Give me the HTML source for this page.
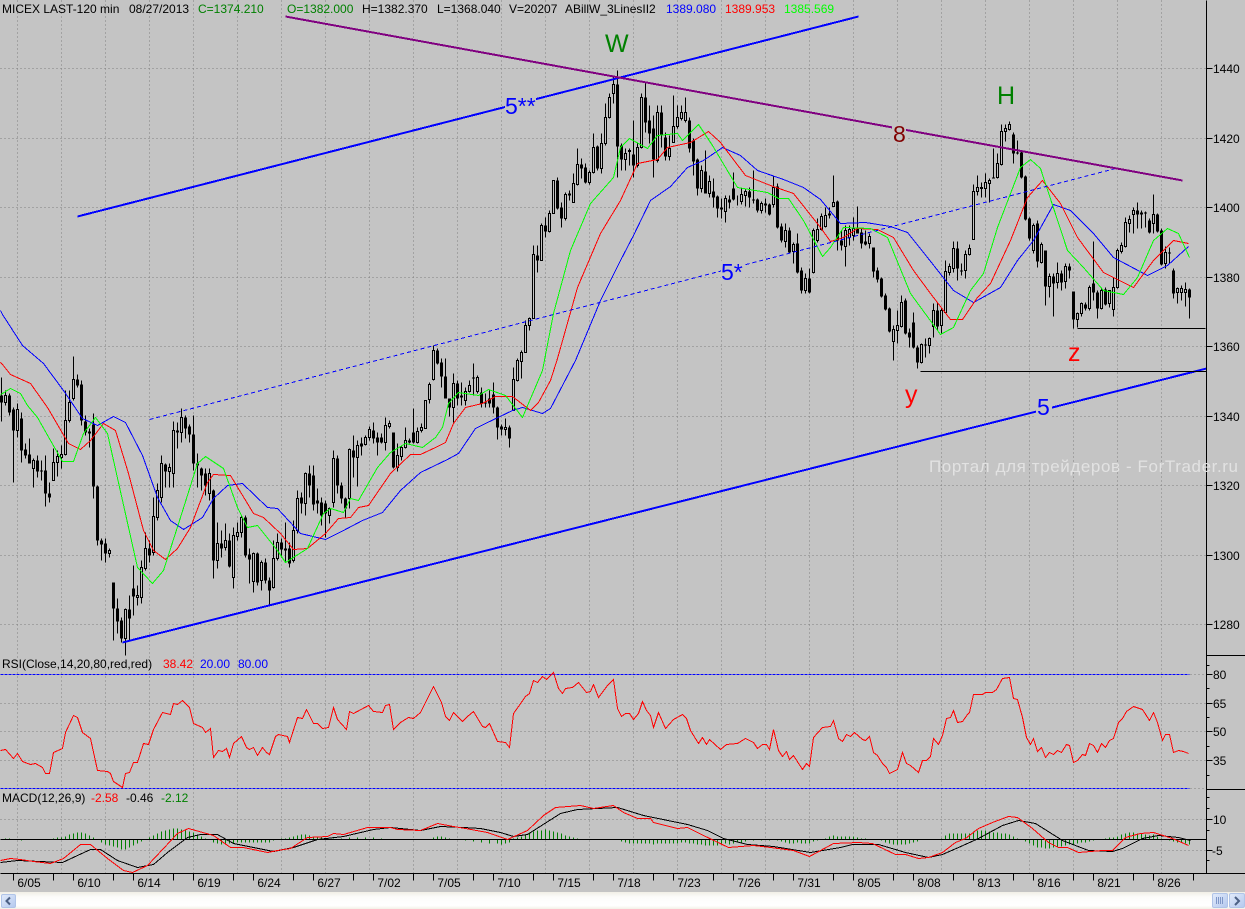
<!DOCTYPE html>
<html>
<head>
<meta charset="utf-8">
<title>MICEX LAST-120 min</title>
<style>
html,body{margin:0;padding:0;background:#c4c4c4;width:1245px;height:909px;overflow:hidden}
svg{display:block}
text{font-family:"Liberation Sans",Arial,sans-serif;font-size:12px;fill:#000}
.l{fill:none;stroke-linejoin:miter}
</style>
</head>
<body>
<svg width="1245" height="909" viewBox="0 0 1245 909" xmlns="http://www.w3.org/2000/svg">
<defs>
<linearGradient id="bar" x1="0" y1="0" x2="0" y2="1"><stop offset="0" stop-color="#f1efe6"/><stop offset=".3" stop-color="#fcfcfa"/><stop offset=".8" stop-color="#ffffff"/><stop offset="1" stop-color="#f3f1e6"/></linearGradient>
<linearGradient id="btn" x1="0" y1="0" x2="1" y2="1"><stop offset="0" stop-color="#e2ebfb"/><stop offset="1" stop-color="#b4c8ee"/></linearGradient>
</defs>
<rect x="0" y="0" width="1245" height="909" fill="#c4c4c4"/>
<g shape-rendering="crispEdges" transform="translate(.5 .5)">
<!-- grid -->
<path class="l" stroke="#808080" stroke-dasharray="1 3" d="M17 0V873M61 0V873M105 0V873M149 0V873M193 0V873M237 0V873M281 0V873M325 0V873M369 0V873M413 0V873M457 0V873M501 0V873M545 0V873M589 0V873M633 0V873M677 0V873M721 0V873M765 0V873M809 0V873M853 0V873M897 0V873M941 0V873M985 0V873M1029 0V873M1073 0V873M1117 0V873M1161 0V873"/>
<path class="l" stroke="#808080" stroke-dasharray="1 3" d="M0 68H1206M0 138H1206M0 207H1206M0 277H1206M0 346H1206M0 416H1206M0 485H1206M0 555H1206M0 624H1206M0 703H1206M0 731H1206M0 760H1206M0 819H1206M0 850H1206M1190 674H1206M1190 788H1206"/>
<!-- RSI bounds -->
<path class="l" stroke="#0000ff" stroke-dasharray="3 1" d="M0 674H1189M0 788H1189"/>
<!-- MACD histogram -->
<path class="l" stroke="#008000" d="M5 839v-1M9 839v-1M21 839v1M53 839v-1M57 839v-2M61 839v-2M65 839v-3M69 839v-5M73 839v-6M77 839v-7M81 839v-7M85 839v-6M89 839v-4M93 839v-2M101 839v3M105 839v5M109 839v6M113 839v7M117 839v8M121 839v10M125 839v10M129 839v8M133 839v6M137 839v4M141 839v2M149 839v-2M153 839v-4M157 839v-6M161 839v-8M165 839v-9M169 839v-10M173 839v-11M177 839v-11M181 839v-10M185 839v-10M189 839v-8M193 839v-7M197 839v-5M201 839v-3M205 839v-1M213 839v3M217 839v4M221 839v5M225 839v5M229 839v4M233 839v4M237 839v3M241 839v3M245 839v3M249 839v3M253 839v3M257 839v3M261 839v3M265 839v3M269 839v3M273 839v1M281 839v-1M285 839v-1M289 839v-2M293 839v-3M297 839v-4M301 839v-5M305 839v-5M309 839v-4M313 839v-3M317 839v-2M321 839v-2M325 839v-1M333 839v-1M341 839v-1M349 839v-2M357 839v-2M365 839v-2M373 839v-2M381 839v-1M433 839v-2M437 839v-3M441 839v-3M445 839v-2M449 839v-1M465 839v1M473 839v2M481 839v3M489 839v4M497 839v4M501 839v5M505 839v4M509 839v3M513 839v-1M517 839v-2M521 839v-3M525 839v-5M529 839v-7M533 839v-8M537 839v-9M541 839v-9M545 839v-10M549 839v-9M553 839v-8M557 839v-7M561 839v-6M565 839v-4M569 839v-3M573 839v-2M577 839v-1M621 839v2M625 839v3M629 839v4M633 839v4M637 839v4M641 839v4M645 839v4M649 839v4M653 839v5M657 839v4M661 839v4M665 839v4M669 839v4M673 839v4M677 839v4M681 839v3M685 839v3M689 839v4M693 839v4M697 839v5M701 839v5M705 839v6M709 839v6M713 839v6M717 839v6M721 839v5M725 839v4M729 839v5M733 839v4M737 839v3M741 839v3M745 839v2M753 839v1M761 839v1M769 839v1M777 839v1M781 839v2M785 839v3M789 839v4M793 839v4M797 839v3M801 839v4M805 839v4M809 839v4M813 839v2M817 839v1M825 839v-1M829 839v-3M833 839v-4M837 839v-3M841 839v-3M845 839v-3M849 839v-3M853 839v-3M857 839v-2M861 839v-1M865 839v-1M881 839v1M885 839v3M889 839v4M893 839v5M897 839v5M901 839v5M905 839v5M909 839v4M913 839v3M917 839v2M941 839v-1M945 839v-4M949 839v-6M953 839v-6M957 839v-6M961 839v-6M965 839v-6M969 839v-6M973 839v-8M977 839v-9M981 839v-9M985 839v-9M989 839v-8M993 839v-7M997 839v-7M1001 839v-6M1005 839v-6M1009 839v-5M1013 839v-3M1017 839v-1M1025 839v2M1029 839v4M1033 839v6M1037 839v8M1041 839v8M1045 839v9M1049 839v9M1053 839v8M1057 839v8M1061 839v7M1065 839v6M1069 839v5M1073 839v5M1077 839v4M1081 839v3M1085 839v3M1089 839v2M1093 839v1M1105 839v-1M1109 839v-2M1113 839v-2M1117 839v-3M1121 839v-5M1125 839v-6M1129 839v-7M1133 839v-7M1137 839v-6M1141 839v-6M1145 839v-5M1149 839v-4M1153 839v-5M1157 839v-3M1161 839v-1M1169 839v1M1173 839v2M1177 839v3M1181 839v3M1185 839v4M1189 839v5"/>
<path class="l" stroke="#000" d="M0 839H1206"/>
<!-- wicks -->
<path class="l" stroke="#000" d="M1 377V421M5 390V405M9 393V415M13 407V482M17 403V437M21 412V462M25 443V458M29 438V463M33 458V487M37 455V477M41 460V480M45 455V506M49 482V502M53 448V480M57 450V476M61 445V468M65 390V455M69 390V422M73 356V400M77 374V387M81 380V425M85 415V435M89 428V447M93 413V498M97 485V545M101 538V560M105 538V562M109 548V557M113 582V640M117 598V633M121 617V642M125 608V655M129 595V640M133 565V615M137 585V605M141 560V603M145 532V570M149 540V562M153 497V555M157 483V520M161 455V502M165 463V487M169 463V487M173 421V487M177 422V448M181 408V442M185 415V438M189 424V442M193 415V470M197 453V487M201 467V490M205 468V495M209 468V500M213 489V578M217 522V568M221 530V557M225 523V550M229 533V567M233 527V588M237 522V540M241 515V537M245 515V557M249 548V583M253 552V592M257 552V585M261 560V590M265 558V583M269 577V605M273 540V588M277 533V560M281 538V557M285 522V562M289 542V567M293 520V562M297 490V533M301 492V513M305 472V515M309 465V497M313 465V510M317 488V513M321 497V525M325 500V537M329 507V523M333 450V507M337 455V493M341 482V503M345 497V517M349 448V508M353 435V477M357 440V486M361 437V455M365 435V445M369 426V440M373 422V443M377 432V455M381 433V443M385 417V450M389 420V428M393 432V468M397 443V471M401 445V460M405 427V448M409 438V443M413 408V443M417 427V443M421 423V432M425 400V428M429 382V403M433 345V380M437 348V364M441 358V387M445 358V398M449 398V416M453 373V422M457 380V405M461 382V405M465 387V405M469 380V392M473 363V395M477 375V393M481 387V407M485 393V407M489 390V407M493 382V413M497 406V439M501 424V435M505 418V435M509 425V447M513 367V410M517 358V381M521 350V378M525 320V352M529 317V330M533 245V318M537 245V272M541 223V260M545 217V237M549 210V232M553 180V213M557 177V209M561 202V227M565 192V220M569 190V200M573 173V202M577 148V185M581 158V178M585 163V183M589 170V184M593 133V173M597 145V170M601 133V173M605 103V145M609 93V118M613 75V103M617 70V177M621 143V170M625 148V170M629 148V165M633 120V177M637 143V167M641 93V148M645 83V132M649 105V143M653 115V177M657 105V162M661 105V147M665 132V160M669 135V160M673 95V142M677 105V128M681 105V120M685 97V122M689 117V152M693 138V175M697 158V195M701 165V192M705 150V193M709 175V197M713 178V207M717 195V217M721 198V218M725 195V222M729 195V208M733 172V200M737 195V205M741 188V204M745 188V206M749 187V207M753 170V203M757 198V212M761 201V213M765 198V212M769 203V215M773 175V207M777 183V228M781 223V242M785 223V247M789 227V253M793 242V263M797 233V273M801 267V293M805 273V293M809 268V293M813 228V273M817 218V242M821 213V230M825 207V227M829 207V218M833 175V205M837 200V250M841 230V250M845 225V266M849 225V245M853 217V240M857 206V233M861 228V248M865 230V245M869 233V248M873 247V277M877 267V282M881 277V297M885 293V310M889 307V332M893 325V360M897 310V343M901 295V327M905 298V334M909 328V347M913 312V348M917 345V368M921 343V363M925 338V357M929 337V353M933 303V337M937 302V330M941 307V333M945 260V313M949 263V275M953 241V272M957 241V280M961 263V275M965 250V278M969 244V255M973 184V239M977 175V195M981 182V197M985 173V197M989 178V202M993 148V177M997 153V178M1001 124V165M1005 124V141M1009 121V130M1013 132V163M1017 140V154M1021 150V178M1025 175V220M1029 217V240M1033 223V253M1037 220V267M1041 242V263M1045 250V305M1049 273V297M1053 273V316M1057 262V288M1061 270V290M1065 263V288M1069 263V278M1073 291V328M1077 312V327M1081 302V316M1085 302V310M1089 285V310M1093 241V300M1097 290V318M1101 287V309M1105 287V305M1109 290V307M1113 277V316M1117 248V288M1121 242V253M1125 217V247M1129 215V232M1133 207V233M1137 202V228M1141 210V228M1145 211V227M1149 218V233M1153 194V233M1157 213V232M1161 228V265M1165 246V268M1169 247V263M1173 268V298M1177 287V303M1181 285V300M1185 282V306M1189 288V318"/>
<!-- filled bodies -->
<path class="l" stroke="#000" stroke-width="3" d="M1 395V402M9 395V412M13 409V430M21 418V450M25 449V455M29 454V463M37 460V471M41 470V471M45 470V493M49 493V497M77 379V385M81 384V420M85 421V432M89 431V433M93 424V486M97 486V540M101 540V544M105 543V553M113 582V608M117 608V621M121 620V638M129 609V618M133 588V596M149 548V555M165 464V471M177 430V432M185 417V428M189 426V434M193 434V463M197 463V465M201 468V475M205 473V485M213 490V560M221 543V548M229 540V566M245 517V555M249 554V559M257 553V582M265 562V580M269 580V590M281 542V549M285 548V550M289 548V563M301 497V503M309 473V485M313 475V504M317 500V503M321 502V515M325 503V513M337 458V485M341 485V498M345 498V508M353 450V457M361 443V446M373 430V438M377 437V442M381 437V442M393 432V467M409 440V442M413 432V442M437 350V363M441 362V376M445 376V398M449 398V407M457 383V398M461 395V397M473 377V378M481 392V403M485 402V403M489 398V403M493 394V407M497 407V427M501 426V429M509 427V438M537 255V260M545 225V231M557 180V208M561 207V218M569 193V195M581 164V168M585 167V182M597 146V168M617 84V146M621 145V159M633 154V165M645 97V122M649 120V133M653 128V159M661 112V135M665 137V156M689 120V148M693 140V161M697 159V188M705 171V193M713 191V197M717 196V208M721 207V209M729 199V202M733 188V199M749 191V197M753 199V200M757 199V210M765 203V205M769 204V214M777 186V227M781 226V240M789 230V252M797 243V272M801 270V290M809 278V292M829 213V215M837 201V240M841 240V245M857 227V233M861 232V243M865 241V244M873 247V271M877 270V279M881 278V296M885 295V309M889 308V331M905 300V333M909 332V337M913 322V347M917 347V362M925 344V345M937 310V326M957 248V268M961 270V271M993 177V178M1013 134V153M1017 152V153M1021 152V177M1025 176V219M1029 218V238M1037 223V261M1045 250V286M1053 276V283M1061 273V282M1069 266V270M1073 291V319M1085 304V308M1093 283V292M1097 292V308M1105 289V304M1137 210V214M1141 212V214M1145 212V213M1149 220V232M1157 214V231M1161 230V264M1169 252V253M1173 270V293M1189 289V297"/>
<!-- hollow bodies -->
<path fill="#c4c4c4" stroke="#000" d="M4 395h2v7h-2zM16 409h2v21h-2zM32 460h2v8h-2zM52 462h2v18h-2zM56 456h2v6h-2zM60 454h2v3h-2zM64 420h2v34h-2zM68 402h2v18h-2zM72 379h2v19h-2zM108 550h2v3h-2zM124 609h2v29h-2zM136 595h2v2h-2zM140 567h2v30h-2zM144 548h2v20h-2zM152 516h2v36h-2zM156 490h2v27h-2zM160 463h2v34h-2zM168 467h2v4h-2zM172 430h2v43h-2zM180 417h2v15h-2zM208 473h2v20h-2zM216 543h2v17h-2zM224 540h2v7h-2zM232 535h2v42h-2zM236 532h2v4h-2zM240 517h2v15h-2zM252 553h2v28h-2zM260 562h2v18h-2zM272 558h2v29h-2zM276 542h2v16h-2zM292 530h2v30h-2zM296 498h2v32h-2zM304 473h2v30h-2zM328 508h2v7h-2zM332 458h2v44h-2zM348 449h2v49h-2zM356 445h2v12h-2zM364 437h2v7h-2zM368 429h2v8h-2zM384 425h2v17h-2zM388 423h2v3h-2zM396 455h2v12h-2zM400 447h2v9h-2zM404 440h2v7h-2zM416 431h2v11h-2zM420 427h2v3h-2zM424 400h2v28h-2zM428 384h2v15h-2zM432 350h2v29h-2zM452 383h2v24h-2zM464 391h2v9h-2zM468 385h2v6h-2zM476 377h2v14h-2zM504 427h2v2h-2zM512 379h2v31h-2zM516 360h2v20h-2zM520 352h2v9h-2zM524 325h2v27h-2zM528 318h2v7h-2zM532 254h2v64h-2zM540 225h2v35h-2zM548 213h2v18h-2zM552 180h2v33h-2zM564 194h2v24h-2zM572 183h2v19h-2zM576 164h2v20h-2zM588 172h2v10h-2zM592 147h2v25h-2zM600 143h2v25h-2zM604 117h2v26h-2zM608 97h2v20h-2zM612 84h2v9h-2zM624 153h2v6h-2zM628 150h2v1h-2zM636 147h2v18h-2zM640 97h2v50h-2zM656 112h2v48h-2zM668 148h2v8h-2zM672 126h2v16h-2zM676 117h2v9h-2zM680 112h2v6h-2zM684 112h2v8h-2zM700 170h2v18h-2zM708 181h2v12h-2zM724 198h2v13h-2zM740 194h2v7h-2zM744 191h2v4h-2zM760 203h2v7h-2zM772 187h2v17h-2zM784 230h2v11h-2zM792 244h2v7h-2zM804 278h2v12h-2zM812 230h2v42h-2zM816 229h2v11h-2zM820 216h2v13h-2zM824 215h2v11h-2zM832 202h2v4h-2zM844 230h2v16h-2zM848 229h2v8h-2zM852 228h2v7h-2zM868 236h2v7h-2zM892 329h2v12h-2zM896 325h2v5h-2zM900 302h2v24h-2zM920 344h2v18h-2zM928 338h2v7h-2zM932 310h2v16h-2zM940 310h2v15h-2zM944 271h2v41h-2zM948 266h2v6h-2zM952 248h2v20h-2zM964 254h2v16h-2zM968 248h2v6h-2zM972 191h2v48h-2zM976 187h2v4h-2zM980 187h2v1h-2zM984 182h2v6h-2zM988 180h2v3h-2zM996 163h2v14h-2zM1000 131h2v33h-2zM1004 128h2v3h-2zM1008 124h2v5h-2zM1032 225h2v25h-2zM1040 244h2v18h-2zM1048 276h2v10h-2zM1056 273h2v9h-2zM1064 266h2v15h-2zM1076 313h2v6h-2zM1080 303h2v10h-2zM1088 287h2v21h-2zM1100 290h2v18h-2zM1108 290h2v13h-2zM1112 287h2v22h-2zM1116 250h2v37h-2zM1120 245h2v6h-2zM1124 222h2v24h-2zM1128 219h2v4h-2zM1132 210h2v4h-2zM1152 214h2v9h-2zM1164 252h2v11h-2zM1176 288h2v4h-2zM1180 288h2v4h-2zM1184 289h2v3h-2z"/>
<!-- blue MA -->
<polyline class="l" stroke="#0000ff" points="0,310 2,314 22,345 43,363 63,390 82,418 97,425 113,416 125,422 142,455 157,497 170,520 183,529 202,517 213,498 227,485 242,483 267,507 277,508 300,533 325,539 343,530 362,520 382,512 400,490 420,472 447,459 458,453 475,428 485,423 512,410 522,407 542,413 550,408 575,360 600,300 620,260 633,235 650,200 670,186 687,167 703,160 722,147 740,155 757,170 783,179 803,187 820,199 840,223 865,222 890,226 907,232 927,257 953,290 973,302 1000,287 1017,260 1033,240 1053,204 1070,210 1093,233 1113,257 1147,275 1167,265 1188,246"/>
<!-- red MA -->
<polyline class="l" stroke="#ff0000" points="0,362 2,364 10,374 30,383 47,407 68,443 80,449 90,440 103,423 115,430 128,473 143,530 153,550 165,559 177,548 190,527 207,482 213,474 230,475 253,513 263,517 280,533 293,549 307,548 325,533 338,518 350,517 358,507 368,505 390,473 410,454 420,454 435,447 445,442 453,423 465,407 482,403 495,396 512,396 530,410 538,402 550,380 557,358 577,287 600,233 620,200 637,163 657,159 667,147 690,142 708,131 720,142 745,175 770,185 793,193 820,227 830,241 843,237 857,228 877,229 893,237 913,270 930,293 950,319 962,319 977,297 990,283 1010,240 1027,197 1042,180 1060,203 1077,237 1103,272 1113,277 1133,287 1153,260 1173,240 1188,243"/>
<!-- green MA -->
<polyline class="l" stroke="#00ff00" points="0,394 2,393 10,388 20,393 27,405 37,417 50,440 62,461 73,461 83,433 95,417 107,433 122,500 137,567 152,583 163,570 180,517 197,463 205,456 223,468 237,507 247,527 257,525 277,550 285,562 307,548 323,513 330,508 343,512 350,498 358,500 377,467 390,452 405,443 422,447 435,437 442,427 448,403 458,392 478,395 488,389 505,395 522,417 542,370 553,313 570,250 590,203 613,177 620,147 629,138 647,148 657,135 677,133 682,140 698,124 712,145 737,187 767,192 778,198 788,198 803,220 822,256 830,247 843,227 870,228 887,237 910,293 940,334 953,327 970,290 983,273 997,227 1020,167 1030,159 1040,168 1067,250 1083,267 1103,290 1123,294 1137,277 1153,240 1167,228 1178,233 1189,257"/>
<!-- RSI -->
<polyline class="l" stroke="#ff0000" points="0,750 5,749 13,758 17,753 22,761 30,764 35,763 42,767 45,773 49,773 53,752 62,748 65,732 73,715 77,717 82,732 90,738 97,770 107,771 110,773 113,781 122,787 125,773 129,772 133,762 137,762 143,743 148,744 153,729 162,712 170,714 173,703 177,704 182,700 189,707 193,723 202,727 205,732 210,728 213,757 218,750 222,751 226,748 229,757 233,743 241,736 246,747 249,749 253,747 257,755 262,747 266,752 269,754 275,736 278,734 287,736 289,742 297,717 302,718 306,709 313,723 317,723 322,728 328,727 333,707 337,719 346,729 349,711 353,713 368,705 373,711 382,712 385,705 389,704 393,729 400,722 408,717 413,718 420,712 426,700 433,686 441,702 445,716 449,720 453,712 462,721 467,716 473,711 482,726 485,727 489,723 497,741 505,742 509,747 513,713 518,706 525,696 529,693 533,680 537,682 542,676 546,679 553,672 558,688 562,693 565,688 572,687 578,682 586,692 590,691 593,684 598,697 607,685 613,679 617,708 621,716 625,713 629,713 633,719 638,713 642,701 646,710 650,715 653,727 658,712 665,728 673,719 682,714 686,718 690,730 698,743 702,737 706,744 709,739 720,749 726,744 737,743 745,738 753,742 757,748 762,744 766,744 769,749 773,729 778,750 782,756 786,751 789,759 793,755 802,769 806,763 809,766 813,737 822,727 830,726 833,720 838,738 842,741 846,734 850,736 854,732 862,739 865,740 869,736 873,752 877,755 882,763 886,767 889,773 897,769 902,752 906,763 910,765 918,772 922,760 926,760 930,756 933,738 938,744 942,735 946,718 950,717 953,710 957,722 962,721 967,714 969,712 973,694 982,694 985,692 992,692 996,689 1002,678 1009,677 1013,698 1017,699 1022,717 1026,737 1030,744 1033,738 1037,751 1041,747 1045,757 1049,752 1053,754 1057,750 1061,752 1066,744 1069,745 1073,762 1077,760 1082,754 1085,755 1089,743 1093,745 1097,752 1101,743 1105,747 1109,740 1113,738 1118,722 1122,718 1126,711 1133,706 1142,709 1149,720 1153,712 1157,722 1162,740 1165,734 1169,734 1173,752 1178,750 1183,751 1188,753"/>
<!-- MACD signal -->
<polyline class="l" stroke="#000" points="0,862 17,860 62,862 77,855 90,849 100,849 117,860 137,867 153,864 167,852 187,837 200,834 217,834 233,843 253,847 273,851 293,847 317,839 343,836 373,829 390,827 420,830 440,826 463,827 480,828 500,832 513,836 527,834 560,813 577,809 617,807 643,815 687,824 707,830 723,838 747,844 773,846 810,852 840,847 852,844 878,844 905,852 928,857 942,854 958,847 978,838 1002,825 1018,820 1035,823 1062,840 1088,850 1112,851 1122,848 1142,838 1158,835 1178,837 1190,840"/>
<polyline class="l" stroke="#ff0000" points="0,860 10,858 20,859 33,861 50,863 63,858 80,844 90,844 107,858 123,870 132,872 147,865 163,848 177,833 188,828 213,835 230,847 243,847 267,852 277,850 290,848 307,837 327,836 333,833 343,834 367,827 390,827 397,829 420,830 437,823 453,826 465,828 487,832 507,839 527,830 543,815 555,807 580,805 593,808 613,805 623,812 637,818 650,818 653,822 677,828 687,827 703,835 728,847 753,845 770,847 793,850 809,856 833,843 858,842 872,843 895,854 905,854 918,858 928,857 942,852 955,842 965,838 978,828 992,822 1008,816 1017,817 1032,828 1048,842 1058,847 1067,847 1078,852 1102,850 1112,850 1125,837 1140,833 1153,832 1172,838 1188,845"/>
<!-- trend lines -->
<path class="l" stroke="#0000ff" stroke-dasharray="4 3" d="M149 419L1115 168"/>
<path class="l" stroke="#0000ff" stroke-width="2" d="M77 216L858 16"/>
<path class="l" stroke="#0000ff" stroke-width="2" d="M122 642L1206 368"/>
<path class="l" stroke="#800080" stroke-width="2" d="M285 16L1182 180"/>
<path class="l" stroke="#000" d="M920 371H1206M1077 328H1205"/>
<!-- axes -->
<path class="l" stroke="#000" d="M1206 0V873M1206 655H1245M1206 789H1245M0 873H1245"/>
<path class="l" stroke="#000" d="M1206 68H1212M1206 138H1212M1206 207H1212M1206 277H1212M1206 346H1212M1206 416H1212M1206 485H1212M1206 555H1212M1206 624H1212M1206 674H1212M1206 703H1212M1206 731H1212M1206 760H1212M1206 819H1212M1206 850H1212M1206 665H1209M1206 688H1209M1206 717H1209M1206 746H1209M1206 775H1209M1206 797H1209M1206 808H1209M1206 830H1209M1206 860H1209"/>
<path class="l" stroke="#000" d="M13 873v7M53 873v7M73 873v7M113 873v7M133 873v7M173 873v7M193 873v7M233 873v7M253 873v7M293 873v7M313 873v7M353 873v7M373 873v7M413 873v7M433 873v7M473 873v7M493 873v7M533 873v7M553 873v7M593 873v7M613 873v7M653 873v7M673 873v7M713 873v7M733 873v7M773 873v7M793 873v7M833 873v7M853 873v7M893 873v7M913 873v7M953 873v7M973 873v7M1013 873v7M1033 873v7M1073 873v7M1093 873v7M1133 873v7M1153 873v7M1193 873v7"/>
</g>
<!-- label knock-outs -->
<rect x="505" y="96" width="31" height="20" fill="#c4c4c4"/>
<rect x="892" y="123" width="14" height="20" fill="#c4c4c4"/>
<rect x="721" y="261" width="24" height="21" fill="#c4c4c4"/>
<rect x="1036" y="397" width="16" height="20" fill="#c4c4c4"/>
<!-- header -->
<text x="2" y="13">MICEX LAST-120 min</text>
<text x="129" y="13">08/27/2013</text>
<text x="198" y="13" style="fill:#008000">C=1374.210</text>
<text x="287" y="13" style="fill:#008000">O=1382.000</text>
<text x="362" y="13">H=1382.370</text>
<text x="437" y="13">L=1368.040</text>
<text x="509" y="13">V=20207</text>
<text x="565" y="13">ABillW_3LinesII2</text>
<text x="666" y="13" style="fill:#0000ff">1389.080</text>
<text x="725" y="13" style="fill:#ff0000">1389.953</text>
<text x="784" y="13" style="fill:#00ff00">1385.569</text>
<!-- wave labels -->
<text x="605" y="52" style="font-size:25px;fill:#008000">W</text>
<text x="997" y="104" style="font-size:25px;fill:#008000">H</text>
<text x="905" y="403" style="font-size:25px;fill:#ff0000">y</text>
<text x="1068" y="361" style="font-size:25px;fill:#ff0000">z</text>
<text x="893" y="142" style="font-size:23px;fill:#800000">8</text>
<text x="505" y="114" style="font-size:23px;fill:#0000ff">5**</text>
<text x="721" y="280" style="font-size:23px;fill:#0000ff">5*</text>
<text x="1037" y="415" style="font-size:23px;fill:#0000ff">5</text>
<!-- watermark -->
<text x="929" y="472" textLength="309" lengthAdjust="spacing" style="font-size:17px;fill:#e2e2e2">Портал для трейдеров - ForTrader.ru</text>
<!-- indicators -->
<text x="2" y="668">RSI(Close,14,20,80,red,red)</text>
<text x="163" y="668" style="fill:#ff0000">38.42</text>
<text x="200" y="668" style="fill:#0000ff">20.00</text>
<text x="238" y="668" style="fill:#0000ff">80.00</text>
<text x="2" y="802">MACD(12,26,9)</text>
<text x="91" y="802" style="fill:#ff0000">-2.58</text>
<text x="126" y="802">-0.46</text>
<text x="161" y="802" style="fill:#008000">-2.12</text>
<!-- price axis -->
<text x="1213" y="73">1440</text>
<text x="1213" y="143">1420</text>
<text x="1213" y="212">1400</text>
<text x="1213" y="282">1380</text>
<text x="1213" y="351">1360</text>
<text x="1213" y="421">1340</text>
<text x="1213" y="490">1320</text>
<text x="1213" y="560">1300</text>
<text x="1213" y="629">1280</text>
<text x="1213" y="679">80</text>
<text x="1213" y="708">65</text>
<text x="1213" y="736">50</text>
<text x="1213" y="765">35</text>
<text x="1213" y="824">10</text>
<text x="1212" y="855">-5</text>
<!-- dates -->
<g text-anchor="middle">
<text x="29" y="887">6/05</text><text x="89" y="887">6/10</text><text x="149" y="887">6/14</text><text x="209" y="887">6/19</text><text x="269" y="887">6/24</text><text x="329" y="887">6/27</text><text x="389" y="887">7/02</text><text x="449" y="887">7/05</text><text x="509" y="887">7/10</text><text x="569" y="887">7/15</text><text x="629" y="887">7/18</text><text x="689" y="887">7/23</text><text x="749" y="887">7/26</text><text x="809" y="887">7/31</text><text x="869" y="887">8/05</text><text x="929" y="887">8/08</text><text x="989" y="887">8/13</text><text x="1049" y="887">8/16</text><text x="1109" y="887">8/21</text><text x="1169" y="887">8/26</text>
</g>
<!-- scrollbar -->
<rect x="0" y="892" width="1245" height="17" fill="url(#bar)"/>
<rect x="1.5" y="894.5" width="14" height="13" rx="1.5" fill="url(#btn)" stroke="#b0c4e8"/>
<path d="M10 897.5L6.5 901L10 904.5" fill="none" stroke="#4d6185" stroke-width="2"/>
<rect x="1212.5" y="893.5" width="15" height="14" rx="1.5" fill="url(#btn)" stroke="#b0c4e8"/>
<path d="M1216.5 897v7M1218.5 897v7M1220.5 897v7M1222.5 897v7" fill="none" stroke="#7f97c8"/>
<rect x="1229.5" y="893.5" width="15" height="14" rx="1.5" fill="url(#btn)" stroke="#b0c4e8"/>
<path d="M1235 897L1239 901L1235 905" fill="none" stroke="#4d6185" stroke-width="2"/>
</svg>
</body>
</html>
